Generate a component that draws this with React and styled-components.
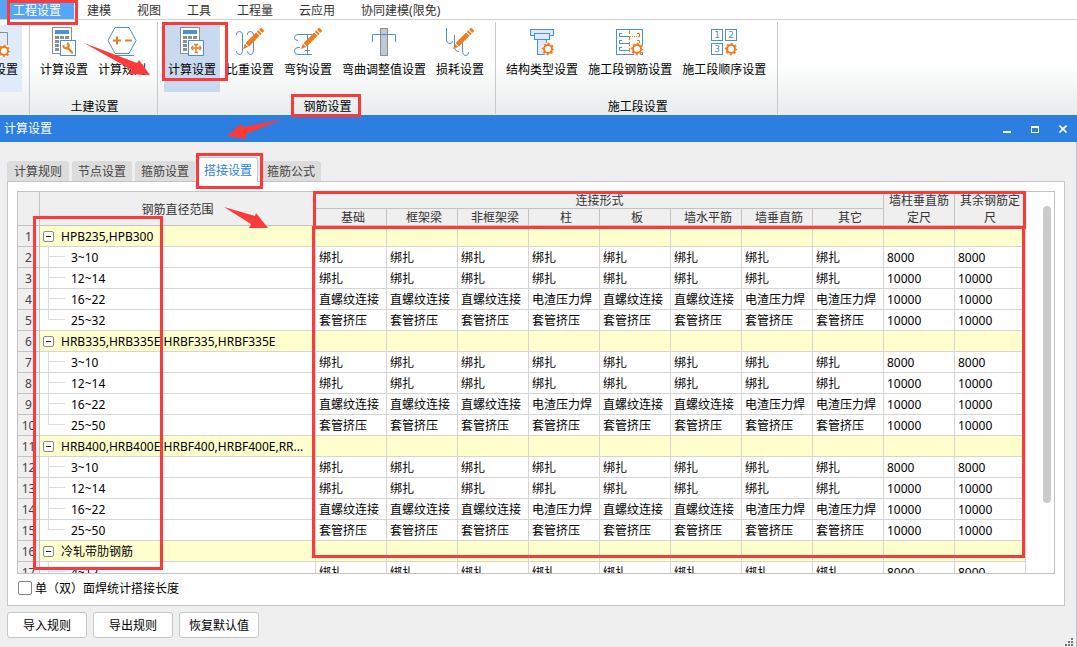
import React from 'react';
import styled, { createGlobalStyle } from 'styled-components';

const RED = '#fd3a3a';
const BLUE = '#4a8fd8';
const ORANGE = '#f07c20';
const SLATE = '#84919d';

const GlobalStyle = createGlobalStyle`
  *, *::before, *::after { box-sizing: border-box; }
  body {
    margin: 0;
    overflow: hidden;
    background: #efefef;
    color: #000;
    font: 12px/16px "Noto Sans", "Noto Sans CJK SC", sans-serif;
  }
  button, input { font: inherit; color: inherit; }
  button { border: 0; padding: 0; background: none; white-space: nowrap; }
`;

const Page = styled.div`
  display: flex;
  flex-direction: column;
  height: 100vh;
`;

const MenuBar = styled.nav`
  display: flex;
  flex: none;
  height: 20px;
  background: #fff;
  border-bottom: 1px solid #d2d2d2;
`;

const MenuItem = styled.button`
  position: relative;
  padding: 2px 13px 0;
  line-height: 18px;
  color: ${(p) => (p.$active ? '#fff' : '#333')};
  background: ${(p) => (p.$active ? '#57a5f7' : 'transparent')};
`;

const Highlight = styled.span`
  position: absolute;
  z-index: 3;
  pointer-events: none;
  border: 3px solid ${RED};
  inset: ${(p) => p.$inset};
  width: ${(p) => p.$width || 'auto'};
  height: ${(p) => p.$height || 'auto'};
`;

const ArrowSvg = styled.svg`
  position: absolute;
  z-index: 4;
  left: ${(p) => p.$left}px;
  top: ${(p) => p.$top}px;
  pointer-events: none;
  fill: ${RED};
`;

const Ribbon = styled.div`
  display: flex;
  flex: none;
  height: 95px;
  padding: 2px 0 1px;
  background: linear-gradient(#fff 45%, #e8ecec);
`;

const Group = styled.section`
  position: relative;
  display: flex;
  flex: none;
  flex-direction: column;
  justify-content: space-between;
  align-items: ${(p) => (p.$clipped ? 'flex-end' : 'center')};
  width: ${(p) => (p.$clipped ? '30px' : 'auto')};
  overflow: ${(p) => (p.$clipped ? 'hidden' : 'visible')};
  padding: 3px 7px 0 6px;
  border-right: 1px solid #c6c9ca;
`;

const Tools = styled.div`
  display: flex;
  gap: 2px;
`;

const ToolButton = styled.button`
  position: relative;
  display: flex;
  flex-direction: column;
  align-items: center;
  gap: 5px;
  height: 67px;
  padding: 2px 4px 0;
  background: ${(p) => p.$bg || 'transparent'};
`;

const GroupTitle = styled.div`
  position: relative;
  margin-left: 3px;
  padding-top: 2px;
  line-height: 15px;
`;

const TitleBar = styled.header`
  position: relative;
  display: flex;
  flex: none;
  align-items: center;
  height: 27px;
  padding-left: 4px;
  background: #2c7fe1;
  color: #fff;
`;

const WindowTitle = styled.h1`
  flex: 1;
  margin: 0;
  font-size: 12px;
  font-weight: 400;
`;

const WindowButton = styled.button`
  display: flex;
  align-items: center;
  justify-content: center;
  width: 28px;
  height: 27px;
`;

const Dialog = styled.main`
  position: relative;
  display: flex;
  flex: 1;
  flex-direction: column;
  min-height: 0;
  padding: 15px 11px 9px 7px;
  border-right: 1px solid #b9c0d2;
`;

const TabList = styled.div`
  display: flex;
  align-items: flex-end;
  gap: 3px;
  height: 24px;
`;

const Tab = styled.button`
  position: relative;
  z-index: ${(p) => (p.$active ? 2 : 0)};
  width: 60px;
  height: ${(p) => (p.$active ? 25 : 20)}px;
  margin-bottom: ${(p) => (p.$active ? -1 : 0)}px;
  padding-top: 2px;
  line-height: 18px;
  border-radius: 3px 3px 0 0;
  border: ${(p) => (p.$active ? '1px solid #c3c6ca' : '0')};
  border-bottom: 0;
  color: ${(p) => (p.$active ? '#2c7fe1' : '#444')};
  background: ${(p) => (p.$active ? '#fff' : '#dcdcdc')};
  &:first-child { width: 62px; }
`;

const Panel = styled.section`
  display: flex;
  flex: 1;
  flex-direction: column;
  min-height: 0;
  padding: 9px 9px 0;
  background: #fff;
  border: 1px solid #c1c4c8;
`;

const GridArea = styled.div`
  position: relative;
  display: flex;
  flex: 1;
  min-height: 0;
`;

const GridFrame = styled.div`
  display: flex;
  flex: 1;
  align-items: flex-start;
  overflow: hidden;
  border: 1px solid #c3c3c3;
`;

const Gutter = styled.div`
  flex: none;
  width: 28px;
  padding: 14px 3px 0 17px;
`;

const ScrollThumb = styled.div`
  height: 297px;
  border-radius: 4px;
  background: #cbcbcb;
`;

const Table = styled.table`
  flex: 1;
  width: 100%;
  table-layout: fixed;
  border-collapse: separate;
  border-spacing: 0;
`;

const NumberCol = styled.col`width: 22px;`;
const ValueCol = styled.col`width: 71px;`;

const HeadCell = styled.th`
  height: 17px;
  padding: 0;
  font-weight: 400;
  line-height: 18px;
  text-align: center;
  color: #333;
  background: #efefef;
  border: solid #c3c3c3;
  border-width: 0 1px 1px 0;
`;

const HeadLine = styled.div`
  height: ${(p) => (p.$tall ? 33 : 16)}px;
  line-height: ${(p) => (p.$tall ? 17 : 18)}px;
  padding: ${(p) => (p.$sub ? '0 2px 0 6px' : '0 4px')};
`;

const RowNumber = styled.th`
  height: 21px;
  padding: 2px 0 0;
  font-weight: 400;
  line-height: 18px;
  text-align: center;
  color: #444;
  background: #efefef;
  border: solid #c3c3c3;
  border-width: 0 1px 1px 0;
`;

const Cell = styled.td`
  height: 21px;
  padding: ${(p) => (p.$tree ? '0' : '2px 0 0 3px')};
  line-height: 18px;
  white-space: nowrap;
  background: ${(p) => (p.$group ? '#ffffcd' : '#fff')};
  border: solid #d5d5d5;
  border-width: 0 1px 1px 0;
`;

const TreeItem = styled.div`
  display: flex;
  align-items: center;
  height: 20px;
  gap: ${(p) => (p.$group ? 7 : 6)}px;
  padding-left: ${(p) => (p.$group ? 3 : 8)}px;
`;

const TreeText = styled.span`
  padding-top: 2px;
`;

const Toggle = styled.button`
  display: flex;
  align-items: center;
  justify-content: center;
  width: 11px;
  height: 11px;
  border: 1px solid #8c8c8c;
  border-radius: 2px;
  background: #fff;
  &::before {
    content: '';
    width: 5px;
    height: 1px;
    background: #222;
  }
`;

const Branch = styled.span`
  align-self: flex-start;
  width: 17px;
  height: 20px;
  background:
    linear-gradient(#dedede, #dedede) 0 9px / 17px 1px no-repeat,
    linear-gradient(#dedede, #dedede) 0 0 / 1px ${(p) => (p.$last ? 10 : 20)}px no-repeat;
`;

const CheckRow = styled.label`
  display: flex;
  flex: none;
  align-items: center;
  align-self: flex-start;
  gap: 3px;
  height: 28px;
  margin-bottom: 3px;
  padding-left: 1px;
`;

const CheckBox = styled.input`
  appearance: none;
  width: 14px;
  height: 14px;
  margin: 0;
  border: 1px solid #858585;
  border-radius: 2px;
  background: #fff;
`;

const CentredParen = styled.span`
  font-family: "Noto Sans CJK TC", sans-serif;
`;

const Actions = styled.footer`
  display: flex;
  flex: none;
  gap: 6px;
  margin-top: 6px;
`;

const ActionButton = styled.button`
  width: 80px;
  height: 26px;
  padding-top: 2px;
  border: 1px solid #c6c6c6;
  border-radius: 3px;
  background: #fff;
`;

const Grip = styled.svg`
  position: absolute;
  right: 2px;
  bottom: 0;
  fill: #6f7480;
`;

function Icon({ width, children }) {
  return (
    <svg width={width} height="30" viewBox={`0 0 ${width} 30`} fill="none" stroke={BLUE} aria-hidden="true">
      {children}
    </svg>
  );
}

function Gear({ x, y }) {
  return (
    <g stroke={ORANGE}>
      <circle cx={x} cy={y} r="6.5" fill="#fff" stroke="none" />
      <circle cx={x} cy={y} r="4" strokeWidth="2" />
      <circle cx={x} cy={y} r="5.4" strokeWidth="1.6" strokeDasharray="2.1 2.14" strokeDashoffset="1" />
    </g>
  );
}

function Pencil({ x, y }) {
  return (
    <g transform={`translate(${x} ${y}) rotate(-45)`} stroke="none" fill={ORANGE}>
      <path d="M0 0L5 -2.3V2.3Z" />
      <rect x="6" y="-2.4" width="15" height="4.8" />
      <rect x="22" y="-2.4" width="2" height="4.8" />
      <rect x="25" y="-2.4" width="3" height="4.8" rx="1" />
    </g>
  );
}

function Calculator({ children }) {
  return (
    <Icon width={24}>
      <rect x="0.5" y="0.5" width="19" height="26" fill="#fff" stroke={SLATE} />
      <rect x="3" y="3" width="14" height="4" fill={BLUE} stroke="none" />
      <g fill={SLATE} stroke="none">
        {[9, 13, 17, 21].map((y) => [3, 8, 13].map((x) => (
          <rect key={`${x}-${y}`} x={x} y={y} width="4" height="3" />
        )))}
      </g>
      <rect x="8.5" y="13.5" width="15" height="15" fill="#fff" />
      {children}
    </Icon>
  );
}

const icons = {
  clipped: (
    <Icon width={24}>
      <path d="M0 5.5H13.5V18" stroke={SLATE} />
      <Gear x={10} y={24} />
    </Icon>
  ),
  calcWrench: (
    <Calculator>
      <path d="M15.5 20.5L20 25.5" stroke={ORANGE} strokeWidth="2.4" strokeLinecap="round" />
      <path d="M11.6 18.2A2.6 2.6 0 1 0 14.8 16.3" stroke={ORANGE} strokeWidth="2" />
    </Calculator>
  ),
  rules: (
    <Icon width={30}>
      <path d="M1 13.5L8 0.5H22L29 13.5L22 26.5H8Z" fill="#fff" />
      <path d="M4 28.5H27" />
      <path d="M6 13.5H14M10 9.5V17.5M18 13.5H25" stroke={ORANGE} strokeWidth="2" />
    </Icon>
  ),
  calcMove: (
    <Calculator>
      <g stroke={ORANGE} strokeWidth="1.4">
        <path d="M11.5 21H21M16 17V25.5" />
        <path d="M14 17.5H18M14.5 25.5H18M13 19L11.5 21L13 23M19.5 19L21 21L19.5 23" />
      </g>
    </Calculator>
  ),
  weight: (
    <Icon width={28}>
      <path d="M0.5 8V7Q0.5 4.5 3.5 4.5Q6.5 4.5 6.5 8V23Q6.5 27.5 3.5 27.5Q0.5 27.5 0.5 24M11.5 8V7Q11.5 4.5 14.5 4.5Q17.5 4.5 17.5 8V23Q17.5 27.5 14.5 27.5Q11.5 27.5 11.5 24" />
      <Pencil x={7} y={22} />
    </Icon>
  ),
  hook: (
    <Icon width={28}>
      <path d="M18 7.5H4Q0.5 7.5 0.5 10.5Q0.5 13.5 4 13.5M6 20.5H4Q0.5 20.5 0.5 24Q0.5 27.5 4 27.5H18M13.5 7V28M11 23.5H16" />
      <Pencil x={7} y={22} />
    </Icon>
  ),
  bend: (
    <Icon width={24}>
      <rect x="8.5" y="1.5" width="7" height="27" fill="#c2c9cf" stroke={SLATE} />
      <path d="M0.5 15V7.5H23.5V15" />
    </Icon>
  ),
  loss: (
    <Icon width={28}>
      <path d="M0.5 1V12Q0.5 16.5 4 16.5Q6.5 16.5 6.5 14M8.5 8V20Q9 24.5 13 24.5M16.5 14V23Q16.5 28.5 20 28.5Q22.5 28.5 22.5 25" />
      <Pencil x={7} y={22} />
    </Icon>
  ),
  structure: (
    <Icon width={24}>
      <g fill="#dcebfb">
        <rect x="0.5" y="2.5" width="23" height="6" />
        <rect x="7.5" y="12.5" width="9" height="15" />
        <rect x="4.5" y="6.5" width="15" height="6" />
      </g>
      <Gear x={18} y={22} />
    </Icon>
  ),
  rebar: (
    <Icon width={28}>
      <rect x="0.5" y="2.5" width="26" height="25" fill="#fff" />
      <path d="M3.5 6.5V9.5H13M6 6.5H3M3.5 13.5V16.5H13M6 13.5H3M3.5 20.5V23.5H13M6 20.5H3" />
      <g stroke={ORANGE}>
        <path d="M13.5 3V27" strokeDasharray="4 2" />
        <path d="M14 9.5H23" strokeDasharray="1 1" />
        <path d="M21 6.5H23.5V10M21 13.5H23.5V16" />
      </g>
      <Gear x={21} y={22} />
    </Icon>
  ),
  order: (
    <Icon width={26}>
      <rect x="0.5" y="2.5" width="11" height="11" fill="#fff" />
      <rect x="14.5" y="2.5" width="11" height="11" fill="#fff" />
      <rect x="0.5" y="16.5" width="11" height="11" fill="#fff" />
      <g fill={BLUE} stroke="none" fontSize="9" fontFamily="DejaVu Sans, sans-serif" textAnchor="middle">
        <text x="6" y="11">1</text>
        <text x="20" y="11">2</text>
        <text x="6" y="25">3</text>
      </g>
      <Gear x={20} y={22} />
    </Icon>
  ),
};

function Tool({ icon, label, bg, children }) {
  return (
    <ToolButton type="button" $bg={bg}>
      {icons[icon]}
      <span>{label}</span>
      {children}
    </ToolButton>
  );
}

const menus = ['建模', '视图', '工具', '工程量', '云应用', '协同建模(限免)'];
const valueHeads = ['基础', '框架梁', '非框架梁', '柱', '板', '墙水平筋', '墙垂直筋', '其它'];

const tie = '绑扎';
const thread = '直螺纹连接';
const slag = '电渣压力焊';
const sleeve = '套管挤压';
const all = (v) => Array(8).fill(v);
const mixed = [thread, thread, thread, slag, thread, thread, slag, slag];

const bars = (last) => [
  { name: '3~10', values: [...all(tie), '8000', '8000'] },
  { name: '12~14', values: [...all(tie), '10000', '10000'] },
  { name: '16~22', values: [...mixed, '10000', '10000'] },
  { name: last, values: [...all(sleeve), '10000', '10000'], last: true },
];

const rows = [
  { name: 'HPB235,HPB300', group: true },
  ...bars('25~32'),
  { name: 'HRB335,HRB335E,HRBF335,HRBF335E', group: true },
  ...bars('25~50'),
  { name: 'HRB400,HRB400E,HRBF400,HRBF400E,RR...', group: true },
  ...bars('25~50'),
  { name: '冷轧带肋钢筋', group: true },
  { name: '4~12', values: [...all(tie), '8000', '8000'] },
];

function Row({ row, number }) {
  const values = row.values || Array(10).fill('');
  return (
    <tr>
      <RowNumber scope="row">{number}</RowNumber>
      <Cell $group={row.group} $tree>
        <TreeItem $group={row.group}>
          {row.group ? <Toggle type="button" aria-label="折叠" /> : <Branch $last={row.last} />}
          <TreeText>{row.name}</TreeText>
        </TreeItem>
      </Cell>
      {values.map((value, i) => <Cell key={i} $group={row.group}>{value}</Cell>)}
    </tr>
  );
}

export default function App() {
  return (
    <Page>
      <GlobalStyle />
      <MenuBar>
        <MenuItem type="button" $active>
          工程设置
          <Highlight $inset="0 -4px -6px 7px" />
        </MenuItem>
        {menus.map((m) => <MenuItem key={m} type="button">{m}</MenuItem>)}
      </MenuBar>

      <Ribbon>
        <Group $clipped>
          <Tools><Tool icon="clipped" label="设置" bg="#dfeafa" /></Tools>
        </Group>
        <Group>
          <Tools>
            <Tool icon="calcWrench" label="计算设置" />
            <Tool icon="rules" label="计算规则" />
          </Tools>
          <GroupTitle>土建设置</GroupTitle>
          <ArrowSvg $left={54} $top={21} width="66" height="33">
            <path d="M0 0L53 20L55 17L66 32L44 31L48 27Z" />
          </ArrowSvg>
        </Group>
        <Group>
          <Tools>
            <Tool icon="calcMove" label="计算设置" bg="#c9d9f0">
              <Highlight $inset="-3px auto auto -2px" $width="66px" $height="59px" />
            </Tool>
            <Tool icon="weight" label="比重设置" />
            <Tool icon="hook" label="弯钩设置" />
            <Tool icon="bend" label="弯曲调整值设置" />
            <Tool icon="loss" label="损耗设置" />
          </Tools>
          <GroupTitle>
            钢筋设置
            <Highlight $inset="-3px -9px -3px -13px" />
          </GroupTitle>
        </Group>
        <Group>
          <Tools>
            <Tool icon="structure" label="结构类型设置" />
            <Tool icon="rebar" label="施工段钢筋设置" />
            <Tool icon="order" label="施工段顺序设置" />
          </Tools>
          <GroupTitle>施工段设置</GroupTitle>
        </Group>
      </Ribbon>

      <TitleBar>
        <WindowTitle>计算设置</WindowTitle>
        <WindowButton type="button" aria-label="最小化">
          <svg width="8" height="8" fill="#fff"><rect y="6" width="8" height="2" /></svg>
        </WindowButton>
        <WindowButton type="button" aria-label="最大化">
          <svg width="8" height="8" fill="#fff"><path fillRule="evenodd" d="M0 1H8V8H0ZM1 3V7H7V3Z" /></svg>
        </WindowButton>
        <WindowButton type="button" aria-label="关闭">
          <svg width="8" height="8" stroke="#fff" strokeWidth="1.6"><path d="M0.5 0.5L7.5 7.5M7.5 0.5L0.5 7.5" /></svg>
        </WindowButton>
        <ArrowSvg $left={227} $top={4} width="56" height="21">
          <path d="M56 0L16 8L14 5L0 17L19 20L19 15Z" />
        </ArrowSvg>
      </TitleBar>

      <Dialog>
        <TabList role="tablist">
          <Tab type="button" role="tab">计算规则</Tab>
          <Tab type="button" role="tab">节点设置</Tab>
          <Tab type="button" role="tab">箍筋设置</Tab>
          <Tab type="button" role="tab" aria-selected="true" $active>
            搭接设置
            <Highlight $inset="-5px -6px -7px -3px" />
          </Tab>
          <Tab type="button" role="tab">箍筋公式</Tab>
        </TabList>

        <Panel>
          <GridArea>
            <GridFrame>
              <Table>
                <colgroup>
                  <NumberCol />
                  <col />
                  {Array.from({ length: 10 }, (_, i) => <ValueCol key={i} />)}
                </colgroup>
                <thead>
                  <tr>
                    <HeadCell rowSpan={2} aria-label="行号" />
                    <HeadCell rowSpan={2}><HeadLine>钢筋直径范围</HeadLine></HeadCell>
                    <HeadCell colSpan={8}><HeadLine>连接形式</HeadLine></HeadCell>
                    <HeadCell rowSpan={2}><HeadLine $tall>墙柱垂直筋定尺</HeadLine></HeadCell>
                    <HeadCell rowSpan={2}><HeadLine $tall>其余钢筋定尺</HeadLine></HeadCell>
                  </tr>
                  <tr>
                    {valueHeads.map((h) => <HeadCell key={h}><HeadLine $sub>{h}</HeadLine></HeadCell>)}
                  </tr>
                </thead>
                <tbody>
                  {rows.map((row, i) => <Row key={i} row={row} number={i + 1} />)}
                </tbody>
              </Table>
              <Gutter><ScrollThumb /></Gutter>
            </GridFrame>
            <Highlight $inset="0 29px auto auto" $width="713px" $height="38px" />
            <Highlight $inset="35px 30px auto auto" $width="713px" $height="332px" />
            <Highlight $inset="25px auto auto 16px" $width="130px" $height="354px" />
            <ArrowSvg $left={207} $top={16} width="44" height="22">
              <path d="M0 0L31 9L32 6L44 21L25 21L27 17Z" />
            </ArrowSvg>
          </GridArea>
          <CheckRow>
            <CheckBox type="checkbox" />
            <span>
              单<CentredParen>（</CentredParen>双<CentredParen>）</CentredParen>面焊统计搭接长度
            </span>
          </CheckRow>
        </Panel>

        <Actions>
          <ActionButton type="button">导入规则</ActionButton>
          <ActionButton type="button">导出规则</ActionButton>
          <ActionButton type="button">恢复默认值</ActionButton>
        </Actions>
        <Grip width="9" height="9">
          <path d="M6 0H8V2H6ZM3 3H5V5H3ZM6 3H8V5H6ZM0 6H2V8H0ZM3 6H5V8H3ZM6 6H8V8H6Z" />
        </Grip>
      </Dialog>
    </Page>
  );
}
